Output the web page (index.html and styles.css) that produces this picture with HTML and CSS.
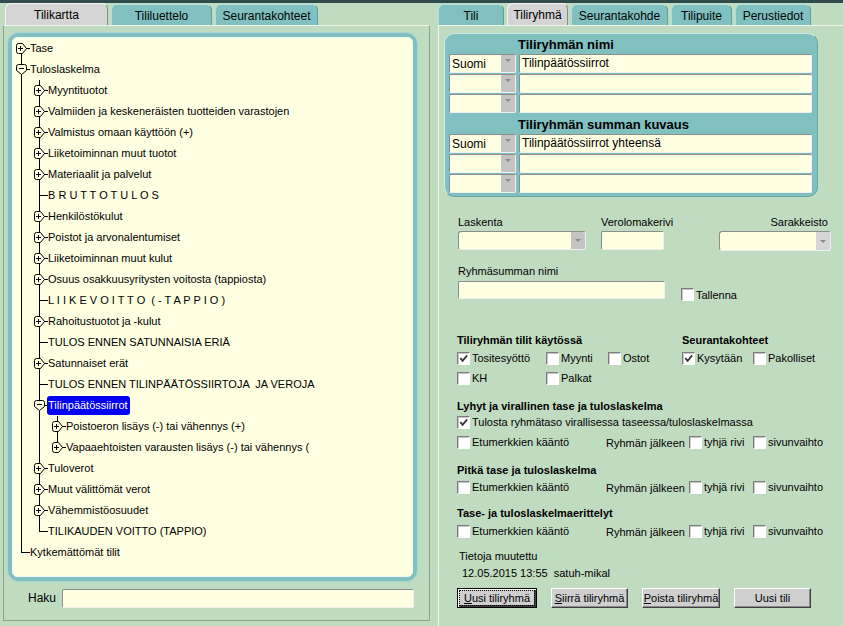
FILE: index.html
```html
<!DOCTYPE html>
<html lang="fi">
<head>
<meta charset="utf-8">
<title>Tilikartta</title>
<link rel="stylesheet" href="styles.css">
</head>
<body>
<svg class="defs" width="0" height="0" aria-hidden="true">
  <defs>
    <symbol id="i-plus" viewBox="0 0 11 11">
      <path d="M2.5 0.5H6.5L10.5 5.5L6.5 10.5H2.5Q0.5 10.5 0.5 8.5V2.5Q0.5 0.5 2.5 0.5Z" fill="#ffffe1" stroke="#000"/>
      <path d="M2 5.5H7M4.5 3V8" stroke="#000" fill="none"/>
    </symbol>
    <symbol id="i-minus" viewBox="0 0 11 11">
      <path d="M0.5 2.5Q0.5 0.5 2.5 0.5H8.5Q10.5 0.5 10.5 2.5V6.5L5.5 10.5L0.5 6.5Z" fill="#ffffe1" stroke="#000"/>
      <path d="M3 4.5H8" stroke="#000" fill="none"/>
    </symbol>
    <symbol id="i-check" viewBox="0 0 12 12">
      <path d="M2.5 5.5L5 8.5L10 2.5" fill="none" stroke="#383838" stroke-width="2"/>
    </symbol>
  </defs>
</svg>
<div class="topbar"></div>
<div class="main">
  <section class="left">
    <div class="tabs">
      <div class="tab active w103">Tilikartta</div>
      <div class="tab w101">Tililuettelo</div>
      <div class="tab w103">Seurantakohteet</div>
    </div>
    <div class="panel lpanel">
      <div class="treeframe">
        <div class="treebox">
          <ul class="tree root">
            <li><div class="row"><span class="tw"><svg class="ic"><use href="#i-plus"/></svg></span><span class="lbl">Tase</span></div></li>
            <li><div class="row"><span class="tw"><svg class="ic"><use href="#i-minus"/></svg></span><span class="lbl">Tuloslaskelma</span></div>
              <ul class="tree">
                <li><div class="row"><span class="tw"><svg class="ic"><use href="#i-plus"/></svg></span><span class="lbl">Myyntituotot</span></div></li>
                <li><div class="row"><span class="tw"><svg class="ic"><use href="#i-plus"/></svg></span><span class="lbl">Valmiiden ja keskeneräisten tuotteiden varastojen</span></div></li>
                <li><div class="row"><span class="tw"><svg class="ic"><use href="#i-plus"/></svg></span><span class="lbl">Valmistus omaan käyttöön (+)</span></div></li>
                <li><div class="row"><span class="tw"><svg class="ic"><use href="#i-plus"/></svg></span><span class="lbl">Liiketoiminnan muut tuotot</span></div></li>
                <li><div class="row"><span class="tw"><svg class="ic"><use href="#i-plus"/></svg></span><span class="lbl">Materiaalit ja palvelut</span></div></li>
                <li><div class="row"><span class="tw"></span><span class="lbl">B R U T T O T U L O S</span></div></li>
                <li><div class="row"><span class="tw"><svg class="ic"><use href="#i-plus"/></svg></span><span class="lbl">Henkilöstökulut</span></div></li>
                <li><div class="row"><span class="tw"><svg class="ic"><use href="#i-plus"/></svg></span><span class="lbl">Poistot ja arvonalentumiset</span></div></li>
                <li><div class="row"><span class="tw"><svg class="ic"><use href="#i-plus"/></svg></span><span class="lbl">Liiketoiminnan muut kulut</span></div></li>
                <li><div class="row"><span class="tw"><svg class="ic"><use href="#i-plus"/></svg></span><span class="lbl">Osuus osakkuusyritysten voitosta (tappiosta)</span></div></li>
                <li><div class="row"><span class="tw"></span><span class="lbl">L I I K E V O I T T O  ( - T A P P I O )</span></div></li>
                <li><div class="row"><span class="tw"><svg class="ic"><use href="#i-plus"/></svg></span><span class="lbl">Rahoitustuotot ja -kulut</span></div></li>
                <li><div class="row"><span class="tw"></span><span class="lbl">TULOS ENNEN SATUNNAISIA ERIÄ</span></div></li>
                <li><div class="row"><span class="tw"><svg class="ic"><use href="#i-plus"/></svg></span><span class="lbl">Satunnaiset erät</span></div></li>
                <li><div class="row"><span class="tw"></span><span class="lbl">TULOS ENNEN TILINPÄÄTÖSSIIRTOJA  JA VEROJA</span></div></li>
                <li><div class="row sel"><span class="tw"><svg class="ic"><use href="#i-minus"/></svg></span><span class="lbl">Tilinpäätössiirrot</span></div>
                  <ul class="tree">
                    <li><div class="row"><span class="tw"><svg class="ic"><use href="#i-plus"/></svg></span><span class="lbl">Poistoeron lisäys (-) tai vähennys (+)</span></div></li>
                    <li><div class="row"><span class="tw"><svg class="ic"><use href="#i-plus"/></svg></span><span class="lbl">Vapaaehtoisten varausten lisäys (-) tai vähennys (</span></div></li>
                  </ul>
                </li>
                <li><div class="row"><span class="tw"><svg class="ic"><use href="#i-plus"/></svg></span><span class="lbl">Tuloverot</span></div></li>
                <li><div class="row"><span class="tw"><svg class="ic"><use href="#i-plus"/></svg></span><span class="lbl">Muut välittömät verot</span></div></li>
                <li><div class="row"><span class="tw"><svg class="ic"><use href="#i-plus"/></svg></span><span class="lbl">Vähemmistöosuudet</span></div></li>
                <li><div class="row"><span class="tw"></span><span class="lbl">TILIKAUDEN VOITTO (TAPPIO)</span></div></li>
              </ul>
            </li>
            <li><div class="row"><span class="tw"></span><span class="lbl">Kytkemättömät tilit</span></div></li>
          </ul>
        </div>
      </div>
      <div class="haku"><span class="haku-l">Haku</span><div class="field haku-in"></div></div>
    </div>
  </section>

  <section class="right">
    <div class="tabs">
      <div class="tab w66">Tili</div>
      <div class="tab active w61">Tiliryhmä</div>
      <div class="tab w97">Seurantakohde</div>
      <div class="tab w61">Tilipuite</div>
      <div class="tab w76">Perustiedot</div>
    </div>
    <div class="panel rpanel">
      <div class="namebox">
        <div class="nb-head">Tiliryhmän nimi</div>
        <div class="nb-row"><div class="nsel"><span class="nsel-t">Suomi</span><span class="nsel-b"><i class="tri"></i></span></div><div class="field nb-in">Tilinpäätössiirrot</div></div>
        <div class="nb-row"><div class="nsel"><span class="nsel-t"></span><span class="nsel-b"><i class="tri"></i></span></div><div class="field nb-in"></div></div>
        <div class="nb-row"><div class="nsel"><span class="nsel-t"></span><span class="nsel-b"><i class="tri"></i></span></div><div class="field nb-in"></div></div>
        <div class="nb-head nb-head2">Tiliryhmän summan kuvaus</div>
        <div class="nb-row"><div class="nsel"><span class="nsel-t">Suomi</span><span class="nsel-b"><i class="tri"></i></span></div><div class="field nb-in">Tilinpäätössiirrot yhteensä</div></div>
        <div class="nb-row"><div class="nsel"><span class="nsel-t"></span><span class="nsel-b"><i class="tri"></i></span></div><div class="field nb-in"></div></div>
        <div class="nb-row"><div class="nsel"><span class="nsel-t"></span><span class="nsel-b"><i class="tri"></i></span></div><div class="field nb-in"></div></div>
      </div>

      <div class="form">
        <div class="trio r-labels"><span>Laskenta</span><span>Verolomakerivi</span><span class="ra">Sarakkeisto</span></div>
        <div class="trio r-fields">
          <div class="dsel w128"><span class="dsel-b"><i class="tri"></i></span></div>
          <div class="field w63"></div>
          <div class="dsel w112"><span class="dsel-b light"><i class="tri"></i></span></div>
        </div>
        <div class="lab r-lab2">Ryhmäsumman nimi</div>
        <div class="r-sum">
          <div class="field w207"></div>
          <label class="cb tallenna"><span class="box"></span>Tallenna</label>
        </div>

        <div class="head2 h-kay"><span class="c225">Tiliryhmän tilit käytössä</span><span>Seurantakohteet</span></div>
        <div class="cbrow r20">
          <label class="cb c89"><span class="box"><svg class="chk"><use href="#i-check"/></svg></span>Tositesyöttö</label>
          <label class="cb c62"><span class="box"></span>Myynti</label>
          <label class="cb c74"><span class="box"></span>Ostot</label>
          <label class="cb c71"><span class="box"><svg class="chk"><use href="#i-check"/></svg></span>Kysytään</label>
          <label class="cb"><span class="box"></span>Pakolliset</label>
        </div>
        <div class="cbrow r20">
          <label class="cb c89"><span class="box"></span>KH</label>
          <label class="cb"><span class="box"></span>Palkat</label>
        </div>

        <div class="head2 h-lyh">Lyhyt ja virallinen tase ja tuloslaskelma</div>
        <div class="cbrow r16">
          <label class="cb"><span class="box"><svg class="chk"><use href="#i-check"/></svg></span>Tulosta ryhmätaso virallisessa taseessa/tuloslaskelmassa</label>
        </div>
        <div class="cbrow r20 mt2">
          <label class="cb c149"><span class="box"></span>Etumerkkien kääntö</label>
          <span class="c83 after">Ryhmän jälkeen</span>
          <label class="cb c64"><span class="box"></span>tyhjä rivi</label>
          <label class="cb"><span class="box"></span>sivunvaihto</label>
        </div>

        <div class="head2 h-pit">Pitkä tase ja tuloslaskelma</div>
        <div class="cbrow r18">
          <label class="cb c149"><span class="box"></span>Etumerkkien kääntö</label>
          <span class="c83 after">Ryhmän jälkeen</span>
          <label class="cb c64"><span class="box"></span>tyhjä rivi</label>
          <label class="cb"><span class="box"></span>sivunvaihto</label>
        </div>

        <div class="head2 h-ter">Tase- ja tuloslaskelmaerittelyt</div>
        <div class="cbrow r18 mt1">
          <label class="cb c149"><span class="box"></span>Etumerkkien kääntö</label>
          <span class="c83 after">Ryhmän jälkeen</span>
          <label class="cb c64"><span class="box"></span>tyhjä rivi</label>
          <label class="cb"><span class="box"></span>sivunvaihto</label>
        </div>

        <div class="lab r-muut">Tietoja muutettu</div>
        <div class="lab r-date">12.05.2015 13:55  satuh-mikal</div>

        <div class="buttons">
          <button class="btn focus w80"><span class="fr"><u>U</u>usi tiliryhmä</span></button>
          <button class="btn w77"><u>S</u>iirrä tiliryhmä</button>
          <button class="btn w78"><u>P</u>oista tiliryhmä</button>
          <button class="btn w77">Uusi tili</button>
        </div>
      </div>
    </div>
  </section>
</div>
</body>
</html>
```

FILE: styles.css
```css
* { box-sizing: border-box; }
html, body { margin: 0; padding: 0; }
body {
  width: 843px;
  height: 626px;
  overflow: hidden;
  background: #c0dcc0;
  font-family: "Liberation Sans", Arial, sans-serif;
  font-size: 11px;
  color: #000;
}
.defs { position: absolute; width: 0; height: 0; }
.topbar { height: 3px; background: #2f4b4b; }
.main { display: flex; height: 623px; }
.left { width: 432px; flex: none; }
.right { flex: 1; margin-left: 6px; display: flex; flex-direction: column; }

/* tabs */
.tabs { display: flex; align-items: flex-end; height: 22px; gap: 3px; flex: none; }
.left .tabs { padding-left: 5px; }
.tab {
  height: 21px;
  background: #80c0c0;
  border: 1px solid #b4dcdc;
  border-right-color: #5e9e9e;
  border-bottom: none;
  border-radius: 6px 6px 0 0;
  display: flex;
  align-items: center;
  justify-content: center;
  font-size: 12px;
  padding-top: 1px;
}
.tab.active {
  height: 22px;
  background: #d4d4d4;
  border-color: #f6f6f6 #8a8a8a #8a8a8a #f6f6f6;
}
.w103 { width: 103px; }
.w101 { width: 101px; }
.w66 { width: 66px; }
.w61 { width: 61px; }
.w97 { width: 97px; }
.w76 { width: 76px; }

/* panels */
.panel { border-top: 1px solid #edf7ed; }
.lpanel {
  margin-left: 3px;
  width: 427px;
  height: 596px;
  border-left: 1px solid #8f9f8f;
  border-right: 1px solid #8f9f8f;
  border-bottom: 1px solid #8f9f8f;
  padding: 6px 0 0 3px;
}
.rpanel {
  flex: 1;
  border-left: 1px solid #edf7ed;
  padding: 7px 0 0 5px;
}

/* tree */
.treeframe {
  width: 411px;
  height: 550px;
  background: #80c0c0;
  border: 1px solid #a9d5d5;
  border-radius: 12px;
  padding: 4px;
}
.treebox {
  height: 100%;
  background: #ffffe1;
  border: 1px solid #eef8f8;
  border-radius: 5px;
  overflow: hidden;
}
.tree { list-style: none; margin: 0; padding: 0; }
.tree.root { padding-left: 3px; }
.tree .tree { margin-left: 18px; }
.tree li { position: relative; }
.tree li::before {
  content: "";
  position: absolute;
  left: 5px;
  top: 0;
  bottom: 0;
  border-left: 1px solid #000;
}
.tree li:last-child::before { bottom: auto; height: 11px; }
.tree.root > li:first-child::before { top: 10px; }
.tree li::after {
  content: "";
  position: absolute;
  left: 5px;
  top: 10px;
  width: 9px;
  border-top: 1px solid #000;
}
.row {
  position: relative;
  z-index: 1;
  height: 21px;
  display: flex;
  align-items: center;
}
.tw { width: 13px; height: 21px; flex: none; display: flex; align-items: center; }
.ic { width: 11px; height: 11px; display: block; }
.lbl { white-space: pre; padding: 0 1px; line-height: 19px; height: 19px; }
.sel .lbl { background: #0000f2; color: #fff; border-radius: 3px; padding: 0 2px 0 1px; }

/* search */
.haku { display: flex; align-items: center; margin-top: 6px; height: 20px; }
.haku-l { margin-left: 21px; width: 34px; font-size: 12px; }
.haku-in { width: 352px; height: 19px; }

/* fields */
.field {
  background: #ffffe1;
  border: 1px solid;
  border-color: #8c8c8c #f0f0f0 #f0f0f0 #8c8c8c;
  border-radius: 2px;
  font-size: 12px;
  white-space: pre;
  padding-left: 2px;
  line-height: 17px;
}

/* name box */
.namebox {
  width: 374px;
  background: #80c0c0;
  border: 1px solid #cfeaea;
  border-right-color: #6aa8a8;
  border-bottom-color: #6aa8a8;
  border-radius: 10px;
  padding: 2px 5px 3px 4px;
}
.nb-head { height: 18px; margin-left: 69px; font-size: 13px; font-weight: bold; line-height: 17px; }
.nb-head2 { height: 21px; line-height: 23px; }
.nb-row { display: flex; gap: 3px; height: 19px; margin-bottom: 1px; }
.nb-row:nth-child(4), .nb-row:last-child { margin-bottom: 0; }
.nsel {
  width: 67px;
  display: flex;
  background: #ffffe1;
  border: 1px solid;
  border-color: #8c8c8c #f0f0f0 #f0f0f0 #8c8c8c;
  border-radius: 2px;
}
.nsel-t { flex: 1; font-size: 12px; padding-left: 2px; line-height: 19px; }
.nsel-b { width: 14px; background: #c4c4c4; display: flex; align-items: center; justify-content: center; }
.nb-in { flex: 1; }
.tri {
  display: block;
  width: 0;
  height: 0;
  border-left: 3px solid transparent;
  border-right: 3px solid transparent;
  border-top: 3px solid #8a8a8a;
  margin-top: -6px;
}

/* form */
.form { padding-left: 14px; }
.trio { display: grid; grid-template-columns: 143px 118px 112px; }
.ra { text-align: right; padding-right: 3px; }
.r-labels { margin-top: 18px; height: 14px; line-height: 14px; }
.r-fields { margin-top: 2px; height: 19px; align-items: start; }
.dsel {
  height: 19px;
  display: flex;
  justify-content: flex-end;
  background: #ffffe1;
  border: 1px solid;
  border-color: #8c8c8c #f0f0f0 #f0f0f0 #8c8c8c;
  border-radius: 3px;
}
.dsel-b { width: 14px; background: #c4c4c4; display: flex; align-items: center; justify-content: center; border-radius: 0 2px 2px 0; }
.dsel-b.light { background: #d6d6d6; }
.dsel-b .tri { margin-top: 0; }
.w128 { width: 128px; }
.w63 { width: 63px; height: 19px; }
.w112 { width: 112px; height: 20px; }
.w207 { width: 207px; height: 18px; }
.lab { height: 14px; line-height: 14px; }
.r-lab2 { margin-top: 14px; }
.r-sum { display: flex; align-items: center; margin-top: 3px; height: 18px; }
.tallenna { margin-left: 16px; margin-top: 9px; }

.head2 { display: flex; font-weight: bold; height: 16px; line-height: 16px; margin-left: -1px; }
.h-kay { margin-top: 33px; }
.h-lyh { margin-top: 10px; }
.h-pit { margin-top: 10px; }
.h-ter { margin-top: 9px; }
.c225 { width: 225px; flex: none; }

.cbrow { display: flex; align-items: center; margin-left: -1px; }
.r20 { height: 20px; }
.r18 { height: 18px; }
.r16 { height: 16px; }
.mt2 { margin-top: 2px; }
.mt1 { margin-top: 1px; }
.c89 { width: 89px; flex: none; }
.c62 { width: 62px; flex: none; }
.c74 { width: 74px; flex: none; }
.c71 { width: 71px; flex: none; }
.c149 { width: 149px; flex: none; }
.c83 { width: 83px; flex: none; }
.c64 { width: 64px; flex: none; }
.after { padding-top: 2px; }

.cb { display: flex; align-items: center; white-space: nowrap; }
.box {
  width: 13px;
  height: 13px;
  flex: none;
  margin-right: 2px;
  background: #fff;
  border: 1px solid;
  border-color: #7c7c7c #ffffff #ffffff #7c7c7c;
  box-shadow: inset 1px 1px 0 #c8c8c8;
  display: flex;
  align-items: center;
  justify-content: center;
}
.chk { width: 11px; height: 11px; display: block; }

.r-muut { margin-top: 9px; margin-left: 1px; }
.r-date { margin-top: 3px; margin-left: 4px; white-space: pre; }

.buttons { display: flex; gap: 14px; margin-top: 8px; margin-left: -1px; }
.btn {
  height: 20px;
  padding: 0;
  font-family: "Liberation Sans", Arial, sans-serif;
  font-size: 11px;
  color: #000;
  background: #cfcfcf;
  border: 1px solid;
  border-color: #ffffff #404040 #404040 #ffffff;
  box-shadow: inset -1px -1px 0 #8a8a8a;
  display: flex;
  align-items: center;
  justify-content: center;
}
.btn.focus { border: 1px solid #000; box-shadow: inset 1px 1px 0 #fff, inset -2px -2px 0 #404040; }
.fr { border: 1px dotted #000; padding: 1px 4px; line-height: 12px; }
.w80 { width: 80px; }
.w77 { width: 77px; }
.w78 { width: 78px; }
```
